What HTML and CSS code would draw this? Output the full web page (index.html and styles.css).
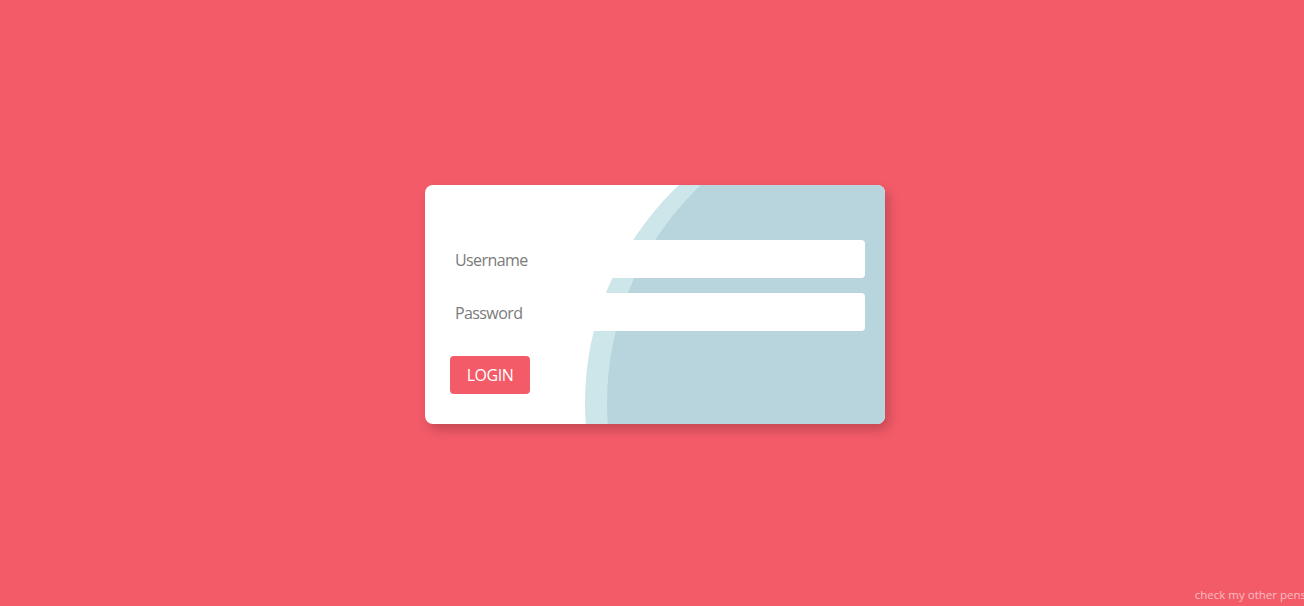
FILE: index.html
```html
<!DOCTYPE html>
<html>
<head>
<meta charset="utf-8">
<link rel="stylesheet" href="styles.css">
</head>
<body>
<main class="stage">
  <form class="card">
    <span class="blob blob-light"></span>
    <span class="blob blob-dark"></span>
    <input class="field" type="text" placeholder="Username">
    <input class="field" type="password" placeholder="Password">
    <button class="btn" type="button">LOGIN</button>
  </form>
</main>
<a class="other" href="#">check my other pens</a>
</body>
</html>
```
FILE: styles.css
```css
html, body {
  margin: 0;
  height: 100%;
}
body {
  background: #f45b69;
  font-family: "Open Sans", "Noto Sans", sans-serif;
  overflow: hidden;
  position: relative;
}
.stage {
  height: 100%;
  display: flex;
  align-items: center;
  justify-content: center;
  padding-left: 6px;
  padding-top: 2px;
  box-sizing: border-box;
}
.card {
  position: relative;
  width: 460px;
  height: 239px;
  box-sizing: border-box;
  padding: 55px 20px 30px;
  background: #fff;
  border-radius: 8px;
  overflow: hidden;
  box-shadow: 4px 6px 12px rgba(0, 0, 0, 0.2);
  display: flex;
  flex-direction: column;
  align-items: flex-start;
}
.blob {
  position: absolute;
  width: 600px;
  height: 600px;
  border-radius: 50%;
  top: -82px;
}
.blob-light {
  left: 160px;
  background: #cde6ea;
}
.blob-dark {
  left: 182px;
  background: #b8d5dd;
}
.field {
  position: relative;
  width: 420px;
  height: 38px;
  box-sizing: border-box;
  border: none;
  border-radius: 4px;
  background: #fff;
  padding: 2px 10px 0;
  font-family: inherit;
  font-size: 16px;
  letter-spacing: -0.6px;
  color: #555;
  outline: none;
  margin: 0 0 15px;
}
.field::placeholder {
  color: #7a7a7a;
}
.btn {
  position: relative;
  margin: 10px 0 0 5px;
  width: 80px;
  height: 38px;
  border: none;
  border-radius: 4px;
  background: #f45b69;
  color: #fff;
  font-family: inherit;
  font-size: 16px;
  letter-spacing: -0.5px;
  padding: 1px 0 0;
  cursor: pointer;
}
.other {
  position: absolute;
  right: -2px;
  bottom: 4px;
  font-size: 11.5px;
  color: rgba(255, 255, 255, 0.6);
  text-decoration: none;
  white-space: nowrap;
}
```
